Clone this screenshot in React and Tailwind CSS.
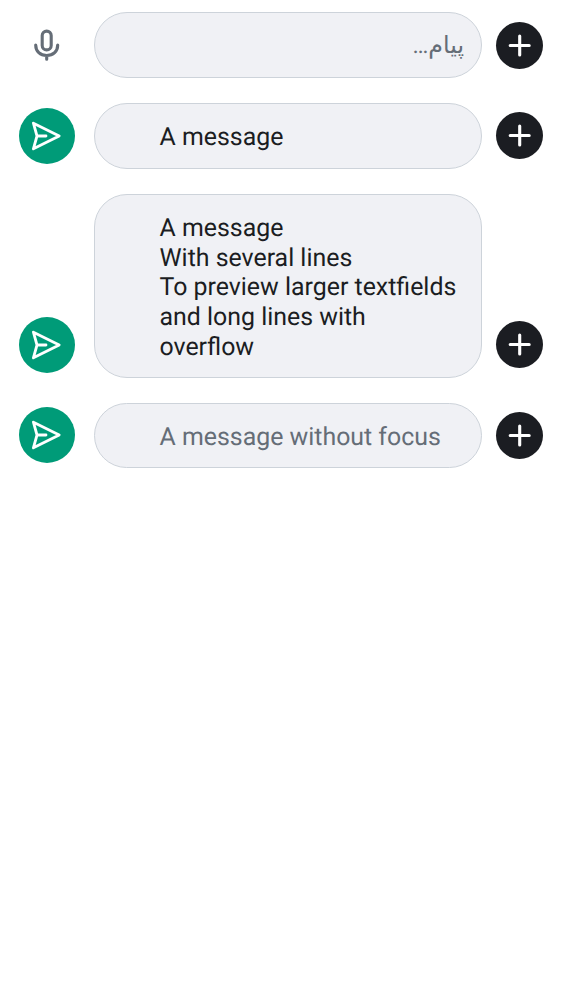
function MicIcon() {
  return (
    <svg viewBox="0 0 56 56" className="size-14 shrink-0" fill="none" stroke="#656d77" strokeWidth="3.1" strokeLinecap="round" strokeLinejoin="round">
      <rect x="23.2" y="13.1" width="9" height="18.8" rx="4.5" />
      <path d="M16.7 27C16.7 33.4 21.2 37.5 27.7 37.5C34.2 37.5 38.7 33.4 38.7 27M27.7 37.6V41.2" />
    </svg>
  );
}

function SendButton() {
  return (
    <button className="size-14 shrink-0 rounded-full bg-[#009b78]" aria-label="Send">
      <svg viewBox="0 0 56 56" className="size-14" fill="none" stroke="#fff" strokeWidth="2.8" strokeLinecap="round" strokeLinejoin="round">
        <path d="M14.4 15.2L40.2 28L14.4 40.8L18 28ZM18 28H27" />
      </svg>
    </button>
  );
}

function PlusButton() {
  return (
    <button className="size-[47px] shrink-0 rounded-full bg-[#1b1d22]" aria-label="Add">
      <svg viewBox="0 0 47 47" className="size-[47px]" fill="none" stroke="#fff" strokeWidth="3.1" strokeLinecap="round">
        <path d="M23.7 14V33M14.2 23.5H33.2" />
      </svg>
    </button>
  );
}

function Composer({ action, className, actionClass = "mb-[5px]", plusClass = "mb-[10px]", children }) {
  return (
    <div className="flex items-end">
      <div className={"flex shrink-0 " + actionClass}>{action}</div>
      <div className={"mr-[14px] ml-[19px] w-[388px] rounded-[33px] border border-[#cdd3da] bg-[#f0f1f5] " + className}>
        {children}
      </div>
      <div className={"flex shrink-0 " + plusClass}>
        <PlusButton />
      </div>
    </div>
  );
}

export default function App() {
  return (
    <main className="flex min-h-screen flex-col gap-[25px] bg-white pt-3 pl-[19px] font-['Roboto','Noto_Sans',sans-serif] text-[24.9px] leading-[29.7px] text-[#1b1d22] [text-rendering:geometricPrecision]">
      <Composer action={<MicIcon />} actionClass="mb-1" plusClass="mb-[9px]" className="h-[66px] px-[17px] pt-[18px] text-[23.7px] text-[#656d77]">
        <p dir="rtl">پیام…</p>
      </Composer>
      <Composer action={<SendButton />} className="h-[66px] pt-[19px] pl-[64.5px]">
        <p>A message</p>
      </Composer>
      <Composer action={<SendButton />} className="h-[184px] pt-[19px] pl-[64.5px]">
        <p className="whitespace-pre">{"A message\nWith several lines\nTo preview larger textfields\nand long lines with\noverflow"}</p>
      </Composer>
      <Composer action={<SendButton />} plusClass="mb-[9px]" className="h-[65px] pt-[19px] pl-[64.5px] text-[#656d77]">
        <p>A message without focus</p>
      </Composer>
    </main>
  );
}
